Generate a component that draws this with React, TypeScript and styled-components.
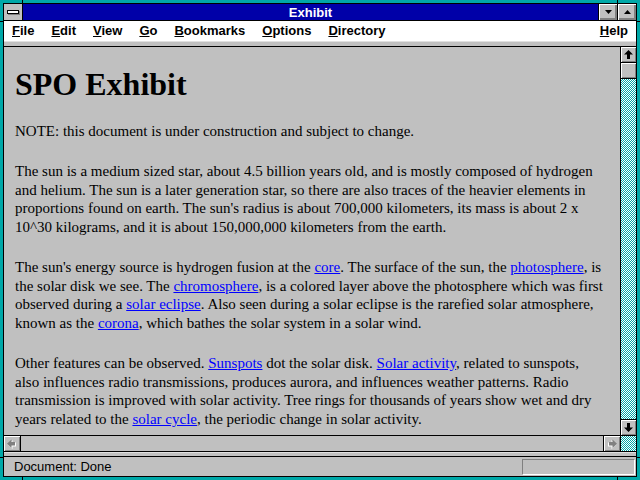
import React from "react";
import styled, { createGlobalStyle } from "styled-components";

const GlobalStyle = createGlobalStyle`
  html, body {
    margin: 0;
    padding: 0;
    background: #00a8a8;
  }
`;

const menuItems = [
  { key: "F", rest: "ile" },
  { key: "E", rest: "dit" },
  { key: "V", rest: "iew" },
  { key: "G", rest: "o" },
  { key: "B", rest: "ookmarks" },
  { key: "O", rest: "ptions" },
  { key: "D", rest: "irectory" },
];

const ArrowUp = () => (
  <svg width="9" height="9" viewBox="0 0 9 9">
    <polygon points="4.5,0 9,4.5 6,4.5 6,9 3,9 3,4.5 0,4.5" fill="#000" />
  </svg>
);

const ArrowDown = () => (
  <svg width="9" height="9" viewBox="0 0 9 9">
    <polygon points="3,0 6,0 6,4.5 9,4.5 4.5,9 0,4.5 3,4.5" fill="#000" />
  </svg>
);

const GreyArrow = ({ dir }: { dir: "left" | "right" }) => (
  <svg
    width="10"
    height="10"
    viewBox="0 0 10 10"
    style={dir === "right" ? { transform: "scaleX(-1)" } : undefined}
  >
    <polygon points="5.5,1 5.5,3.5 9,3.5 9,7.5 5.5,7.5 5.5,10 0.5,5.5" fill="#fff" />
    <polygon points="4.5,0.5 4.5,3 8,3 8,6.5 4.5,6.5 4.5,9 0,4.7" fill="#808080" />
  </svg>
);

const Triangle = ({ up }: { up?: boolean }) => (
  <svg width="7" height="4" viewBox="0 0 7 4">
    <polygon points={up ? "3.5,0 7,4 0,4" : "0,0 7,0 3.5,4"} fill="#000" />
  </svg>
);

const App = () => {
  return (
    <>
      <GlobalStyle />
      <Frame>
        <Notch style={{ left: 22, top: 0, width: 1, height: 4 }} />
        <Notch style={{ left: 617, top: 0, width: 1, height: 4 }} />
        <Notch style={{ left: 22, top: 476, width: 1, height: 4 }} />
        <Notch style={{ left: 617, top: 476, width: 1, height: 4 }} />
        <Notch style={{ left: 0, top: 21, width: 4, height: 1 }} />
        <Notch style={{ left: 636, top: 21, width: 4, height: 1 }} />
        <Notch style={{ left: 0, top: 457, width: 4, height: 1 }} />
        <Notch style={{ left: 636, top: 457, width: 4, height: 1 }} />
        <Window>
          <TitleBar>
            <SysBox>
              <SysBar />
            </SysBox>
            <Caption>Exhibit</Caption>
            <TitleButton>
              <Triangle />
            </TitleButton>
            <TitleButton>
              <Triangle up />
            </TitleButton>
          </TitleBar>

          <MenuBar>
            {menuItems.map((m) => (
              <MenuItem key={m.key}>
                <u>{m.key}</u>
                {m.rest}
              </MenuItem>
            ))}
            <Spacer />
            <MenuItem>
              <u>H</u>elp
            </MenuItem>
          </MenuBar>
          <Separator />

          <Main>
            <Content>
              <Heading>SPO Exhibit</Heading>
              <Para>NOTE: this document is under construction and subject to change.</Para>
              <Para>
                The sun is a medium sized star, about 4.5 billion years old, and is mostly composed of hydrogen
                <br />
                and helium. The sun is a later generation star, so there are also traces of the heavier elements in
                <br />
                proportions found on earth. The sun's radius is about 700,000 kilometers, its mass is about 2 x
                <br />
                10^30 kilograms, and it is about 150,000,000 kilometers from the earth.
              </Para>
              <Para>
                The sun's energy source is hydrogen fusion at the <Link>core</Link>. The surface of the sun, the{" "}
                <Link>photosphere</Link>, is
                <br />
                the solar disk we see. The <Link>chromosphere</Link>, is a colored layer above the photosphere which was first
                <br />
                observed during a <Link>solar eclipse</Link>. Also seen during a solar eclipse is the rarefied solar atmosphere,
                <br />
                known as the <Link>corona</Link>, which bathes the solar system in a solar wind.
              </Para>
              <Para>
                Other features can be observed. <Link>Sunspots</Link> dot the solar disk. <Link>Solar activity</Link>, related to sunspots,
                <br />
                also influences radio transmissions, produces aurora, and influences weather patterns. Radio
                <br />
                transmission is improved with solar activity. Tree rings for thousands of years show wet and dry
                <br />
                years related to the <Link>solar cycle</Link>, the periodic change in solar activity.
              </Para>
            </Content>
            <VScroll>
              <ScrollButton>
                <ArrowUp />
              </ScrollButton>
              <ScrollButton />
              <Track />
              <ScrollButton $last>
                <ArrowDown />
              </ScrollButton>
            </VScroll>
          </Main>

          <HScroll>
            <HButton>
              <GreyArrow dir="left" />
            </HButton>
            <HTrack />
            <HButton $right>
              <GreyArrow dir="right" />
            </HButton>
            <Corner />
          </HScroll>
          <StatusSeparator />

          <StatusBar>
            <StatusText>Document: Done</StatusText>
            <ProgressBox />
          </StatusBar>
        </Window>
      </Frame>
    </>
  );
};

export default App;

const Frame = styled.div`
  position: relative;
  box-sizing: border-box;
  width: 640px;
  height: 480px;
  padding: 3px;
  background: #00a8a8;
`;

const Notch = styled.div`
  position: absolute;
  background: #000;
`;

const Window = styled.div`
  display: flex;
  flex-direction: column;
  box-sizing: border-box;
  height: 100%;
  border: 1px solid #000;
  background: #c0c0c0;
  overflow: hidden;
`;

const TitleBar = styled.div`
  display: flex;
  align-items: stretch;
  height: 16px;
  border-bottom: 1px solid #000;
  background: #0000a8;
  flex-shrink: 0;
`;

const SysBox = styled.div`
  display: flex;
  align-items: center;
  justify-content: center;
  width: 18px;
  background: #c0c0c0;
  border-right: 1px solid #000;
`;

const SysBar = styled.div`
  box-sizing: border-box;
  width: 12px;
  height: 4px;
  background: #fff;
  border: 1px solid #000;
  box-shadow: 1px 1px 0 #808080;
`;

const Caption = styled.div`
  flex: 1;
  display: flex;
  align-items: center;
  justify-content: center;
  color: #fff;
  font-family: "Liberation Sans", Arial, sans-serif;
  font-weight: bold;
  font-size: 13px;
`;

const TitleButton = styled.div`
  display: flex;
  align-items: center;
  justify-content: center;
  box-sizing: border-box;
  width: 19px;
  background: #c0c0c0;
  border-left: 1px solid #000;
  box-shadow: inset 1px 1px 0 #fff, inset -1px -1px 0 #808080, inset -2px -2px 0 #808080;
`;

const MenuBar = styled.div`
  display: flex;
  align-items: center;
  gap: 17px;
  height: 20px;
  padding: 0 8px;
  background: #fff;
  flex-shrink: 0;
`;

const MenuItem = styled.span`
  font-family: "Liberation Sans", Arial, sans-serif;
  font-weight: bold;
  font-size: 13px;
  color: #000;
  line-height: 20px;
`;

const Spacer = styled.div`
  flex: 1;
`;

const Separator = styled.div`
  height: 4px;
  border-top: 1px solid #e0e0e0;
  border-bottom: 1px solid #000;
  background: #c0c0c0;
  flex-shrink: 0;
`;

const Main = styled.div`
  display: flex;
  height: 388px;
  flex-shrink: 0;
`;

const Content = styled.div`
  flex: 1;
  padding: 0 0 0 11px;
  overflow: hidden;
  font-family: "Liberation Serif", "Times New Roman", serif;
  font-size: 15px;
  color: #000;
`;

const Heading = styled.h1`
  margin: 20px 0 20px;
  font-size: 32px;
  font-weight: bold;
  line-height: 35px;
`;

const Para = styled.p`
  margin: 0 0 21.3px;
  line-height: 18.67px;
  white-space: nowrap;
`;

const Link = styled.span`
  color: #0000ff;
  text-decoration: underline;
`;

const VScroll = styled.div`
  display: flex;
  flex-direction: column;
  width: 15px;
  border-left: 1px solid #000;
`;

const ScrollButton = styled.div<{ $last?: boolean }>`
  display: flex;
  align-items: center;
  justify-content: center;
  box-sizing: border-box;
  height: 16px;
  background: #c0c0c0;
  border-bottom: ${(p) => (p.$last ? "none" : "1px solid #000")};
  border-top: ${(p) => (p.$last ? "1px solid #000" : "none")};
  box-shadow: inset 1px 1px 0 #fff, inset -1px -1px 0 #808080;
  flex-shrink: 0;
`;

const Track = styled.div`
  flex: 1;
  background: repeating-conic-gradient(#00a8a8 0% 25%, #fff 0% 50%) 0 0 / 2px 2px;
`;

const HScroll = styled.div`
  display: flex;
  height: 15px;
  border-top: 1px solid #000;
  border-bottom: 1px solid #000;
  flex-shrink: 0;
`;

const HButton = styled.div<{ $right?: boolean }>`
  display: flex;
  align-items: center;
  justify-content: center;
  box-sizing: border-box;
  width: 17px;
  background: #c0c0c0;
  border-right: ${(p) => (p.$right ? "none" : "1px solid #000")};
  border-left: ${(p) => (p.$right ? "1px solid #000" : "none")};
  box-shadow: inset 1px 1px 0 #fff, inset -1px -1px 0 #808080;
`;

const HTrack = styled.div`
  flex: 1;
  background: #c0c0c0;
`;

const Corner = styled.div`
  width: 15px;
  border-left: 1px solid #000;
  background: repeating-conic-gradient(#00a8a8 0% 25%, #fff 0% 50%) 0 0 / 2px 2px;
`;

const StatusSeparator = styled.div`
  height: 3px;
  border-top: 1px solid #e0e0e0;
  border-bottom: 1px solid #000;
  background: #c0c0c0;
  flex-shrink: 0;
`;

const StatusBar = styled.div`
  flex: 1;
  display: flex;
  align-items: center;
  justify-content: space-between;
  padding: 0 1px 0 10px;
`;

const StatusText = styled.span`
  font-family: "Liberation Sans", Arial, sans-serif;
  font-size: 13px;
  color: #000;
`;

const ProgressBox = styled.div`
  box-sizing: border-box;
  width: 113px;
  height: 16px;
  border-top: 1px solid #808080;
  border-left: 1px solid #808080;
  border-right: 1px solid #fff;
  border-bottom: 1px solid #fff;
`;
